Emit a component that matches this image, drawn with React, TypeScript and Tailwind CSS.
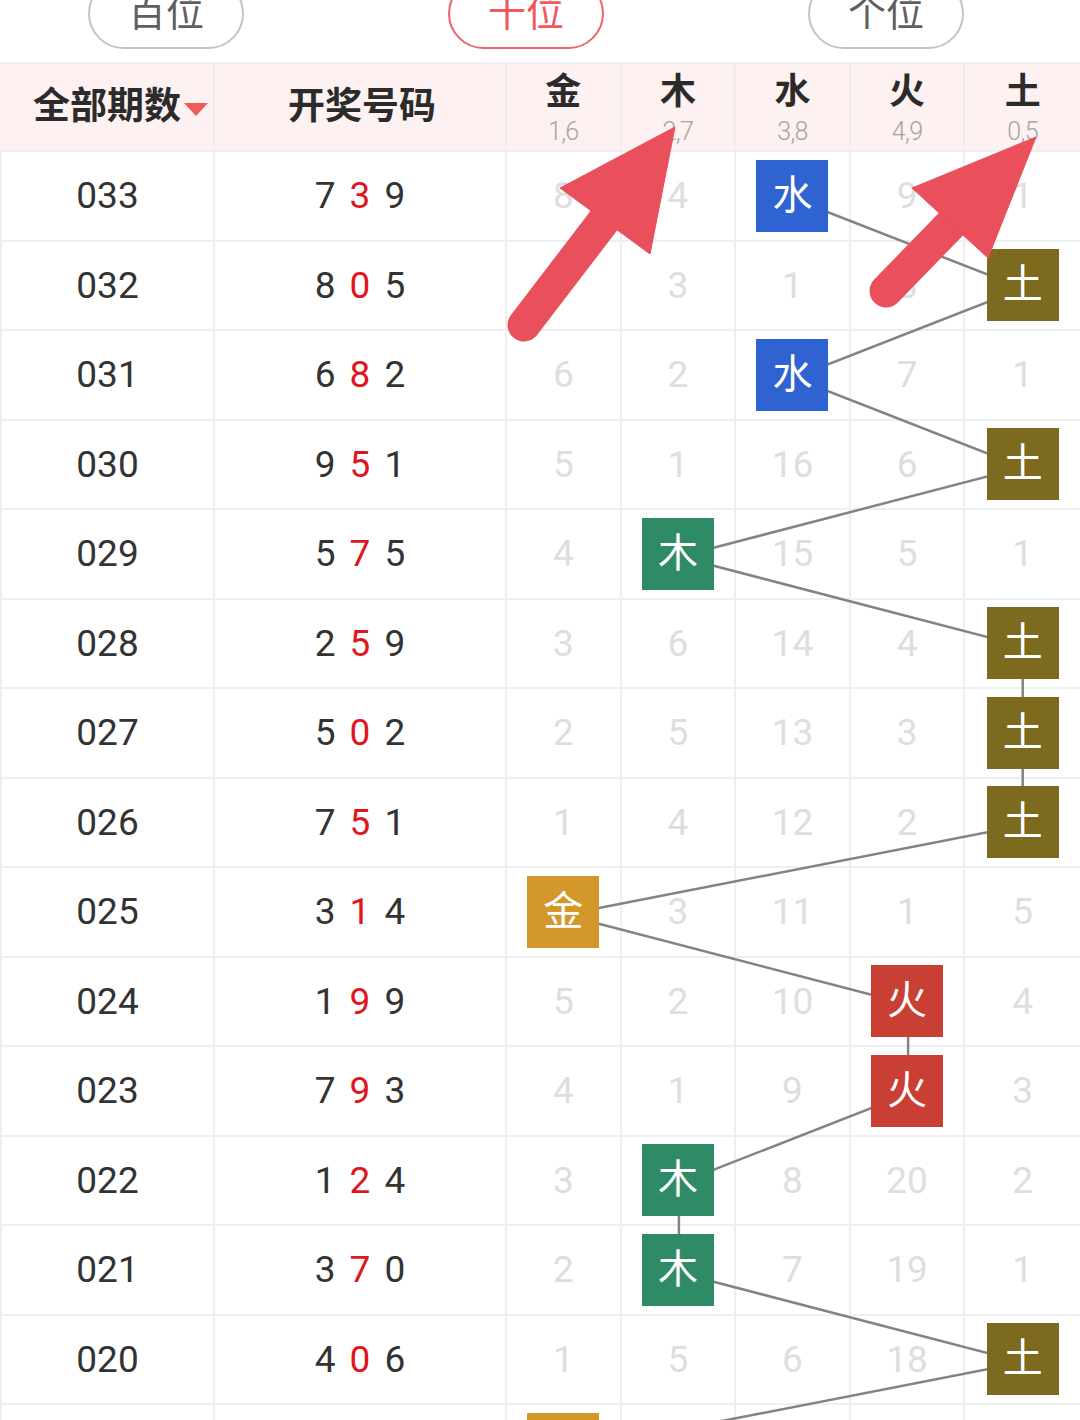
import React from 'react';

type El = 0 | 1 | 2 | 3 | 4;

const ELEMENTS = [
  { name: '金', sub: '1,6', color: 'bg-[#d4972a]' },
  { name: '木', sub: '2,7', color: 'bg-[#2e8b66]' },
  { name: '水', sub: '3,8', color: 'bg-[#2f63d1]' },
  { name: '火', sub: '4,9', color: 'bg-[#c93f34]' },
  { name: '土', sub: '0,5', color: 'bg-[#7c6a1f]' },
];

const ROWS: { issue: string; nums: [number, number, number]; hit: El; miss: number[] }[] = [
  { issue: '033', nums: [7, 3, 9], hit: 2, miss: [8, 4, 0, 9, 1] },
  { issue: '032', nums: [8, 0, 5], hit: 4, miss: [7, 3, 1, 8, 0] },
  { issue: '031', nums: [6, 8, 2], hit: 2, miss: [6, 2, 0, 7, 1] },
  { issue: '030', nums: [9, 5, 1], hit: 4, miss: [5, 1, 16, 6, 0] },
  { issue: '029', nums: [5, 7, 5], hit: 1, miss: [4, 0, 15, 5, 1] },
  { issue: '028', nums: [2, 5, 9], hit: 4, miss: [3, 6, 14, 4, 0] },
  { issue: '027', nums: [5, 0, 2], hit: 4, miss: [2, 5, 13, 3, 0] },
  { issue: '026', nums: [7, 5, 1], hit: 4, miss: [1, 4, 12, 2, 0] },
  { issue: '025', nums: [3, 1, 4], hit: 0, miss: [0, 3, 11, 1, 5] },
  { issue: '024', nums: [1, 9, 9], hit: 3, miss: [5, 2, 10, 0, 4] },
  { issue: '023', nums: [7, 9, 3], hit: 3, miss: [4, 1, 9, 0, 3] },
  { issue: '022', nums: [1, 2, 4], hit: 1, miss: [3, 0, 8, 20, 2] },
  { issue: '021', nums: [3, 7, 0], hit: 1, miss: [2, 0, 7, 19, 1] },
  { issue: '020', nums: [4, 0, 6], hit: 4, miss: [1, 5, 6, 18, 0] },
  { issue: '019', nums: [5, 1, 3], hit: 0, miss: [0, 4, 5, 17, 1] },
];

const HEAD_H = 90;
const ROW_H = 89.5;
const COL_X0 = 507;
const COL_W = (1080 - 507) / 5;

function TabPill({ label, active }: { label: string; active?: boolean }) {
  return (
    <div
      className={`-mt-[22px] flex h-[71px] w-[156px] items-center justify-center rounded-full border-2 text-[38px] ${
        active ? 'border-[#e9676c] text-[#ee5a5f]' : 'border-[#c4c4c4] text-[#5f5f5f]'
      }`}
    >
      {label}
    </div>
  );
}

export default function App() {
  const points = ROWS.map((r, i) => ({
    x: COL_X0 + COL_W * (r.hit + 0.5),
    y: HEAD_H + ROW_H * i + ROW_H / 2,
  }));

  return (
    <div className="relative h-[1420px] w-[1080px] overflow-hidden bg-white font-['Roboto','Noto_Sans_CJK_SC',sans-serif]">
      {/* position tabs */}
      <div className="flex h-[62px] gap-[204px] overflow-hidden pl-[88px]">
        <TabPill label="百位" />
        <TabPill label="十位" active />
        <TabPill label="个位" />
      </div>

      <div className="relative border-t-2 border-[#eceef1]">
        {/* header */}
        <div className="grid h-[88px] grid-cols-[215px_292px_repeat(5,1fr)] border-b-2 border-[#eceef1] bg-[#fdf1f1]">
          <div className="flex items-center justify-center border-r-2 border-[#eceef1] pl-[28px] text-[37px] font-bold text-[#2b2b2b]">
            全部期数
            <span className="mt-[4px] ml-[3px] h-0 w-0 border-x-[12px] border-t-[13px] border-x-transparent border-t-[#f05c5c]" />
          </div>
          <div className="flex items-center justify-center border-r-2 border-[#eceef1] pl-[4px] text-[37px] font-bold text-[#2b2b2b]">
            开奖号码
          </div>
          {ELEMENTS.map((e, i) => (
            <div
              key={e.name}
              className={`flex flex-col items-center pt-[6px] ${i < 4 ? 'border-r-2 border-[#eceef1]' : ''}`}
            >
              <span className="text-[36px] font-bold leading-[44px] text-[#2b2b2b]">{e.name}</span>
              <span className="mt-[2px] text-[25px] font-light leading-[32px] tracking-tight text-[#a5a5a5]">{e.sub}</span>
            </div>
          ))}
        </div>

        {/* rows */}
        {ROWS.map((r) => (
          <div
            key={r.issue}
            className="grid h-[89.5px] grid-cols-[215px_292px_repeat(5,1fr)] border-b-2 border-[#eeeff2]"
          >
            <div className="flex items-center justify-center border-x-2 border-[#eeeff2] text-[37px] text-[#333]">
              {r.issue}
            </div>
            <div className="flex items-center justify-center gap-[14px] border-r-2 border-[#eeeff2] text-[37px] text-[#333]">
              <span>{r.nums[0]}</span>
              <span className="text-[#e0161e]">{r.nums[1]}</span>
              <span>{r.nums[2]}</span>
            </div>
            {r.miss.map((m, c) => (
              <div
                key={c}
                className={`flex items-center justify-center text-[37px] text-[#dedede] ${
                  c < 4 ? 'border-r-2 border-[#eeeff2]' : ''
                }`}
              >
                {c === r.hit ? (
                  <div
                    className={`relative z-10 flex h-[72px] w-[72px] items-center justify-center text-[40px] text-white ${ELEMENTS[c].color}`}
                  >
                    {ELEMENTS[c].name}
                  </div>
                ) : (
                  m
                )}
              </div>
            ))}
          </div>
        ))}

        {/* trend line */}
        <svg className="pointer-events-none absolute top-0 left-0" width={1080} height={1500} viewBox="0 0 1080 1500">
          <polyline
            points={points.map((p) => `${p.x},${p.y}`).join(' ')}
            fill="none"
            stroke="#838383"
            strokeWidth={2.5}
          />
        </svg>
      </div>

      {/* annotation arrows */}
      <svg className="pointer-events-none absolute inset-0 z-20" width={1080} height={1420} viewBox="0 0 1080 1420">
        <g fill="#e9505c" stroke="#e9505c">
          <line x1={524} y1={325} x2={612} y2={210} strokeWidth={33} strokeLinecap="round" />
          <polygon points="675,127 560,188 650,254" strokeWidth={1} />
          <line x1={886} y1={291} x2={955} y2={220} strokeWidth={33} strokeLinecap="round" />
          <polygon points="1036,137 912,188 988,258" strokeWidth={1} />
        </g>
      </svg>
    </div>
  );
}
